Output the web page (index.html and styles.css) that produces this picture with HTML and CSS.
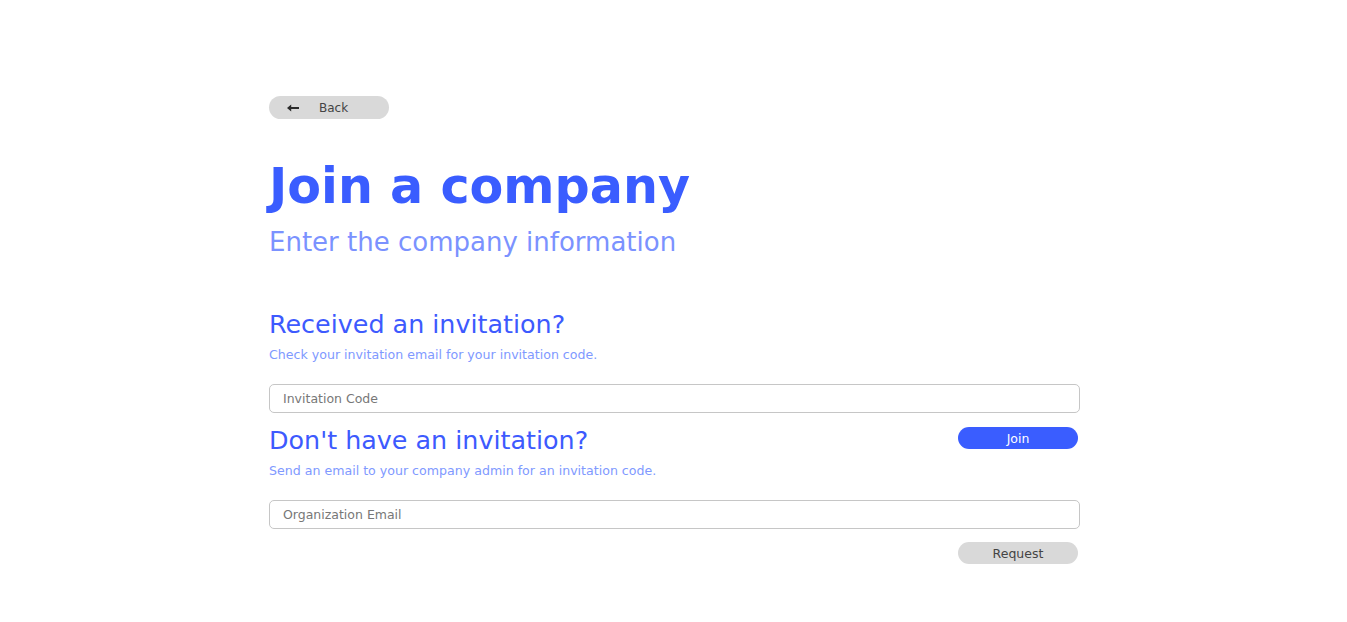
FILE: index.html
```html
<!DOCTYPE html>
<html lang="en">
<head>
<meta charset="utf-8">
<title>Join a company</title>
<link rel="stylesheet" href="styles.css">
</head>
<body>
<main class="page">
  <button class="back-btn" type="button">
    <svg class="back-icon" width="12" height="8" viewBox="0 0 12 8" aria-hidden="true">
      <path d="M0 4 L4.2 0.6 L4.2 3 L12 3 L12 5 L4.2 5 L4.2 7.4 Z" fill="#2b2b2b"/>
    </svg>
    <span>Back</span>
  </button>
  <h1 class="title">Join a company</h1>
  <p class="subtitle">Enter the company information</p>

  <section class="block first">
    <h2 class="block-title">Received an invitation?</h2>
    <p class="block-text">Check your invitation email for your invitation code.</p>
    <input class="field" type="text" placeholder="Invitation Code">
  </section>

  <section class="block">
    <div class="block-head">
      <h2 class="block-title">Don't have an invitation?</h2>
      <button class="btn btn-primary" type="button">Join</button>
    </div>
    <p class="block-text">Send an email to your company admin for an invitation code.</p>
    <input class="field" type="email" placeholder="Organization Email">
    <div class="actions">
      <button class="btn btn-muted" type="button">Request</button>
    </div>
  </section>
</main>
</body>
</html>
```

FILE: styles.css
```css
* { box-sizing: border-box; }
body {
  margin: 0;
  background: #ffffff;
  font-family: "DejaVu Sans", "Open Sans", sans-serif;
}
.page {
  width: 811px;
  margin-left: 269px;
  padding-top: 96px;
}
.back-btn {
  display: flex;
  align-items: center;
  width: 120px;
  height: 23px;
  border: none;
  border-radius: 12px;
  background: #d9d9d9;
  padding: 0 0 0 18px;
  font-family: inherit;
  font-size: 12px;
  color: #444;
}
.back-icon { margin-right: 20px; }
.title {
  margin: 37px 0 0;
  font-size: 49.2px;
  line-height: 60px;
  font-weight: 700;
  color: #3a5dff;
}
.subtitle {
  margin: 10px 0 0;
  font-size: 26px;
  line-height: 32px;
  color: #7b92ff;
}
.block.first { margin-top: 50px; }
.block-title {
  margin: 0;
  font-size: 25.4px;
  line-height: 32px;
  font-weight: 400;
  color: #3d5afe;
}
.block-text {
  margin: 7px 0 0;
  font-size: 12.6px;
  line-height: 16px;
  color: #8099ff;
}
.field {
  display: block;
  width: 100%;
  height: 29px;
  margin-top: 21px;
  border: 1px solid #c6c6c6;
  border-radius: 5px;
  padding: 0 13px;
  font-family: inherit;
  font-size: 12.5px;
  color: #333;
  outline: none;
}
.field::placeholder { color: #777; }
.block-head {
  display: flex;
  justify-content: space-between;
  align-items: flex-start;
  margin-top: 11px;
}
.btn {
  width: 120px;
  height: 22px;
  border: none;
  border-radius: 11px;
  font-family: inherit;
  font-size: 12.5px;
  margin-right: 2px;
}
.block-head .btn { margin-top: 3px; }
.btn-primary { background: #3a5dff; color: #fff; }
.btn-muted { background: #d9d9d9; color: #444; }
.actions {
  display: flex;
  justify-content: flex-end;
  margin-top: 13px;
}
```
